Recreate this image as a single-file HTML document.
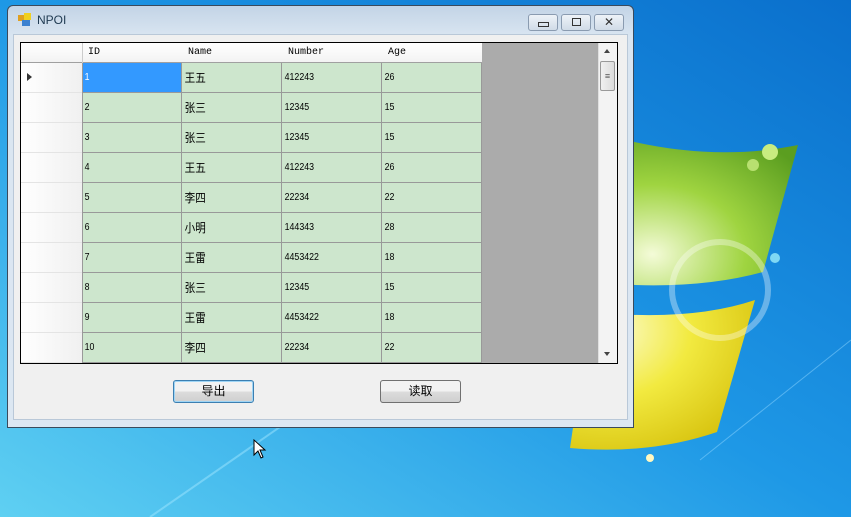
<!DOCTYPE html>
<html><head><meta charset="utf-8">
<style>
*{margin:0;padding:0;box-sizing:border-box}
body{width:851px;height:517px;overflow:hidden;position:relative;font-family:"Liberation Sans","Noto Sans CJK SC",sans-serif;background:#1a86d8}
.abs{position:absolute}
#win{left:7px;top:5px;width:627px;height:423px;border:1px solid #3a4a5c;border-radius:6px 6px 0 0;background:linear-gradient(#c3d4e6,#d9e5f1 30px,#dce7f2);}
#client{left:13px;top:34px;width:615px;height:386px;background:#f0f0f0;border:1px solid #b9c8d8}
.tb{top:14px;height:17px;border:1px solid #8a9bb0;border-radius:3px;background:linear-gradient(#eef3f8,#d0dbe7);}
#grid{left:20px;top:42px;width:598px;height:322px;border:1px solid #000;background:#ababab;overflow:hidden}
.c{position:absolute;font-size:10px;color:#000;line-height:30px;padding-left:3px;font-family:"Liberation Sans","Noto Sans CJK SC",sans-serif;transform:scaleX(.88);transform-origin:left}
.h{position:absolute;font-size:10px;font-family:"Liberation Mono",monospace;line-height:20px;padding-left:6px}
.btn{top:380px;width:81px;height:23px;border:1px solid #707070;border-radius:3px;background:linear-gradient(#f2f2f2 50%,#dcdcdc 50%,#cfcfcf);font-size:12px;text-align:center;line-height:21px}
</style></head><body>
<svg class="abs" style="left:0;top:0" width="851" height="517">
<defs>
<linearGradient id="bg" x1="0" y1="1" x2="1" y2="0"><stop offset="0" stop-color="#5fd0f2"/><stop offset=".5" stop-color="#1e98e6"/><stop offset="1" stop-color="#0a6fcc"/></linearGradient>
<radialGradient id="gr" cx=".3" cy=".8" r=".9"><stop offset="0" stop-color="#f4fbd8"/><stop offset=".5" stop-color="#9fd440"/><stop offset="1" stop-color="#5b9e20"/></radialGradient>
<radialGradient id="ye" cx=".2" cy=".2" r=".9"><stop offset="0" stop-color="#fbfbd0"/><stop offset=".5" stop-color="#f2ea40"/><stop offset="1" stop-color="#d8c410"/></radialGradient>
</defs>
<rect width="851" height="517" fill="url(#bg)"/>
<line x1="150" y1="517" x2="420" y2="330" stroke="#9fe6ff" stroke-width="2" opacity=".5"/>
<line x1="700" y1="460" x2="851" y2="340" stroke="#8fd6ff" stroke-width="1" opacity=".5"/>
<path d="M590,130 Q700,165 798,145 L763,272 Q690,292 590,282 Z" fill="url(#gr)"/>
<path d="M590,312 Q690,322 755,300 L717,432 Q650,455 570,448 Z" fill="url(#ye)"/>
<circle cx="720" cy="290" r="48" fill="none" stroke="#fff" stroke-width="6" opacity=".35"/>
<circle cx="770" cy="152" r="8" fill="#c8ec80"/><circle cx="753" cy="165" r="6" fill="#b8e070"/>
<circle cx="775" cy="258" r="5" fill="#7fd8f4"/>
<circle cx="650" cy="458" r="4" fill="#fff8c0"/>
</svg>
<div id="win" class="abs"></div>
<div class="abs" style="left:18px;top:15px;width:6px;height:6px;background:#e0a020"></div>
<div class="abs" style="left:24px;top:13px;width:7px;height:7px;background:#f0d020"></div>
<div class="abs" style="left:22px;top:20px;width:8px;height:6px;background:#3a80d0"></div>
<div class="abs" style="left:37px;top:13px;font-size:12px;color:#1e3950">NPOI</div>
<div class="abs tb" style="left:528px;width:30px"><div class="abs" style="left:9px;top:7px;width:11px;height:5px;border:1px solid #333"></div></div>
<div class="abs tb" style="left:561px;width:30px"><div class="abs" style="left:10px;top:3px;width:9px;height:8px;border:1px solid #333"></div></div>
<div class="abs tb" style="left:594px;width:30px;text-align:center;font-size:12px;line-height:14px;color:#333">✕</div>
<div id="client" class="abs"></div>
<div id="grid" class="abs">
<div class="abs" style="left:0;top:0;width:461px;height:20px;background:linear-gradient(#fff,#f3f3f3);border-bottom:1px solid #a0a0a0"></div>
<div class="abs" style="left:61px;top:0;width:1px;height:20px;background:#ccc"></div>
<div class="h" style="left:61px;top:0">ID</div>
<div class="h" style="left:161px;top:0">Name</div>
<div class="h" style="left:261px;top:0">Number</div>
<div class="h" style="left:361px;top:0">Age</div>
<div class="abs" style="left:0;top:20px;width:61px;height:302px;background:linear-gradient(90deg,#fff,#f0f0f0)"></div>
<div class="abs" style="left:6px;top:30px;width:0;height:0;border-left:5px solid #333;border-top:4px solid transparent;border-bottom:4px solid transparent"></div>
<div id="rows"></div>
<div class="abs" style="left:577px;top:0;width:19px;height:320px;background:#f3f3f3;border-left:1px solid #e0e0e0"></div>
<div class="abs" style="left:583px;top:6px;border-bottom:4px solid #444;border-left:3px solid transparent;border-right:3px solid transparent"></div>
<div class="abs" style="left:583px;top:309px;border-top:4px solid #444;border-left:3px solid transparent;border-right:3px solid transparent"></div>
<div class="abs" style="left:579px;top:18px;width:15px;height:30px;border:1px solid #999;border-radius:2px;background:linear-gradient(90deg,#f0f0f0,#dcdcdc);font-size:9px;text-align:center;line-height:28px;color:#555">≡</div>
</div>
<div class="abs btn" style="left:173px;border-color:#3c7fb1;box-shadow:inset 0 0 0 1px #9fd5f5">导出</div>
<div class="abs btn" style="left:380px">读取</div>
<svg class="abs" style="left:253px;top:439px" width="14" height="20"><path d="M1,1 L1,16 L5,12 L8,19 L10,18 L7,11 L12,11 Z" fill="#fff" stroke="#000"/></svg>
<script>
var d=[["1","王五","412243","26"],["2","张三","12345","15"],["3","张三","12345","15"],["4","王五","412243","26"],["5","李四","22234","22"],["6","小明","144343","28"],["7","王雷","4453422","18"],["8","张三","12345","15"],["9","王雷","4453422","18"],["10","李四","22234","22"]];
var h="";
d.forEach(function(r,i){var t=20+30*i;
h+='<div class="abs" style="left:0;top:'+(t+29)+'px;width:61px;height:1px;background:#e4e4e4"></div>';
h+='<div class="abs" style="left:61px;top:'+t+'px;width:400px;height:30px;background:#cde6cd;border-bottom:1px solid #999"></div>';
for(var j=0;j<4;j++){var l=61+100*j;
if(i==0&&j==0)h+='<div class="abs" style="left:62px;top:'+t+'px;width:99px;height:29px;background:#3399ff"></div>';
h+='<div class="abs" style="left:'+(l+99)+'px;top:'+t+'px;width:1px;height:30px;background:#999"></div>';
h+='<div class="c" style="left:'+l+'px;top:'+t+'px;'+(j==1?'font-size:12px;':'')+(i==0&&j==0?'color:#fff;':'')+'">'+r[j]+'</div>';}
});
h+='<div class="abs" style="left:61px;top:20px;width:1px;height:302px;background:#999"></div>';
document.getElementById("rows").innerHTML=h;
</script>
</body></html>
